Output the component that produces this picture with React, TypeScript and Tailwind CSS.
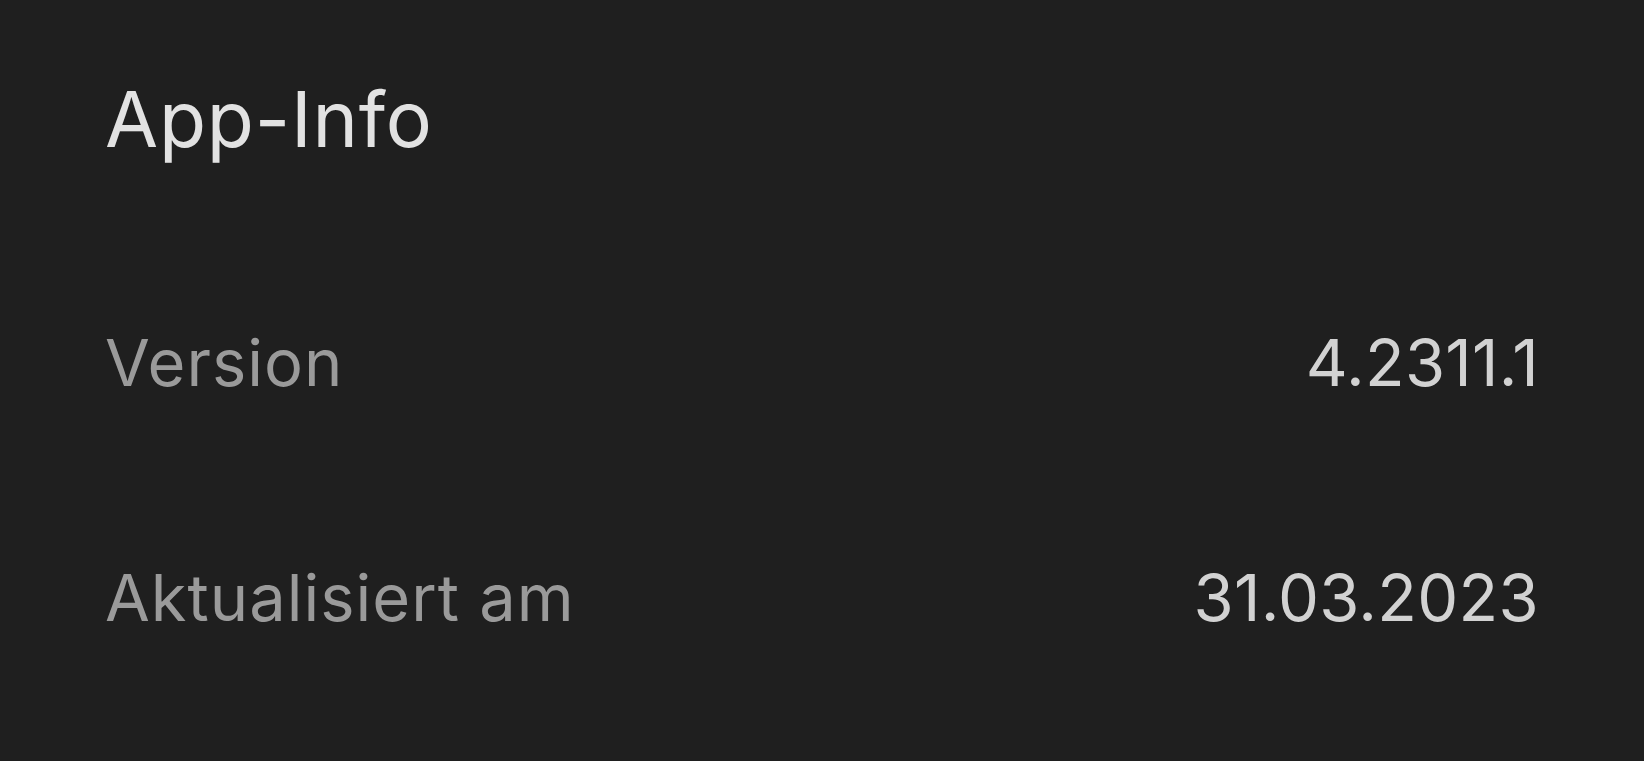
const rows = [
  { label: "Version", value: "4.2311.1" },
  { label: "Aktualisiert am", value: "31.03.2023" },
]

export default function App() {
  return (
    <div className="min-h-[761px] w-full bg-[#1f1f1f] font-['Inter','Liberation_Sans',sans-serif]">
      <div className="flex flex-col px-[105px] pt-[81px]">
        <h1 className="text-[77px] leading-[77px] font-normal tracking-[0.8px] text-[#e2e2e2]">
          App-Info
        </h1>
        <div className="mt-[172px] flex flex-col gap-[170px]">
          {rows.map((row) => (
            <div key={row.label} className="flex items-baseline justify-between">
              <span className="text-[65px] leading-[65px] tracking-[1px] text-[#9a9a9a]">
                {row.label}
              </span>
              <span className="text-[65px] leading-[65px] tracking-[0.3px] text-[#d2d2d2]">
                {row.value}
              </span>
            </div>
          ))}
        </div>
      </div>
    </div>
  )
}
